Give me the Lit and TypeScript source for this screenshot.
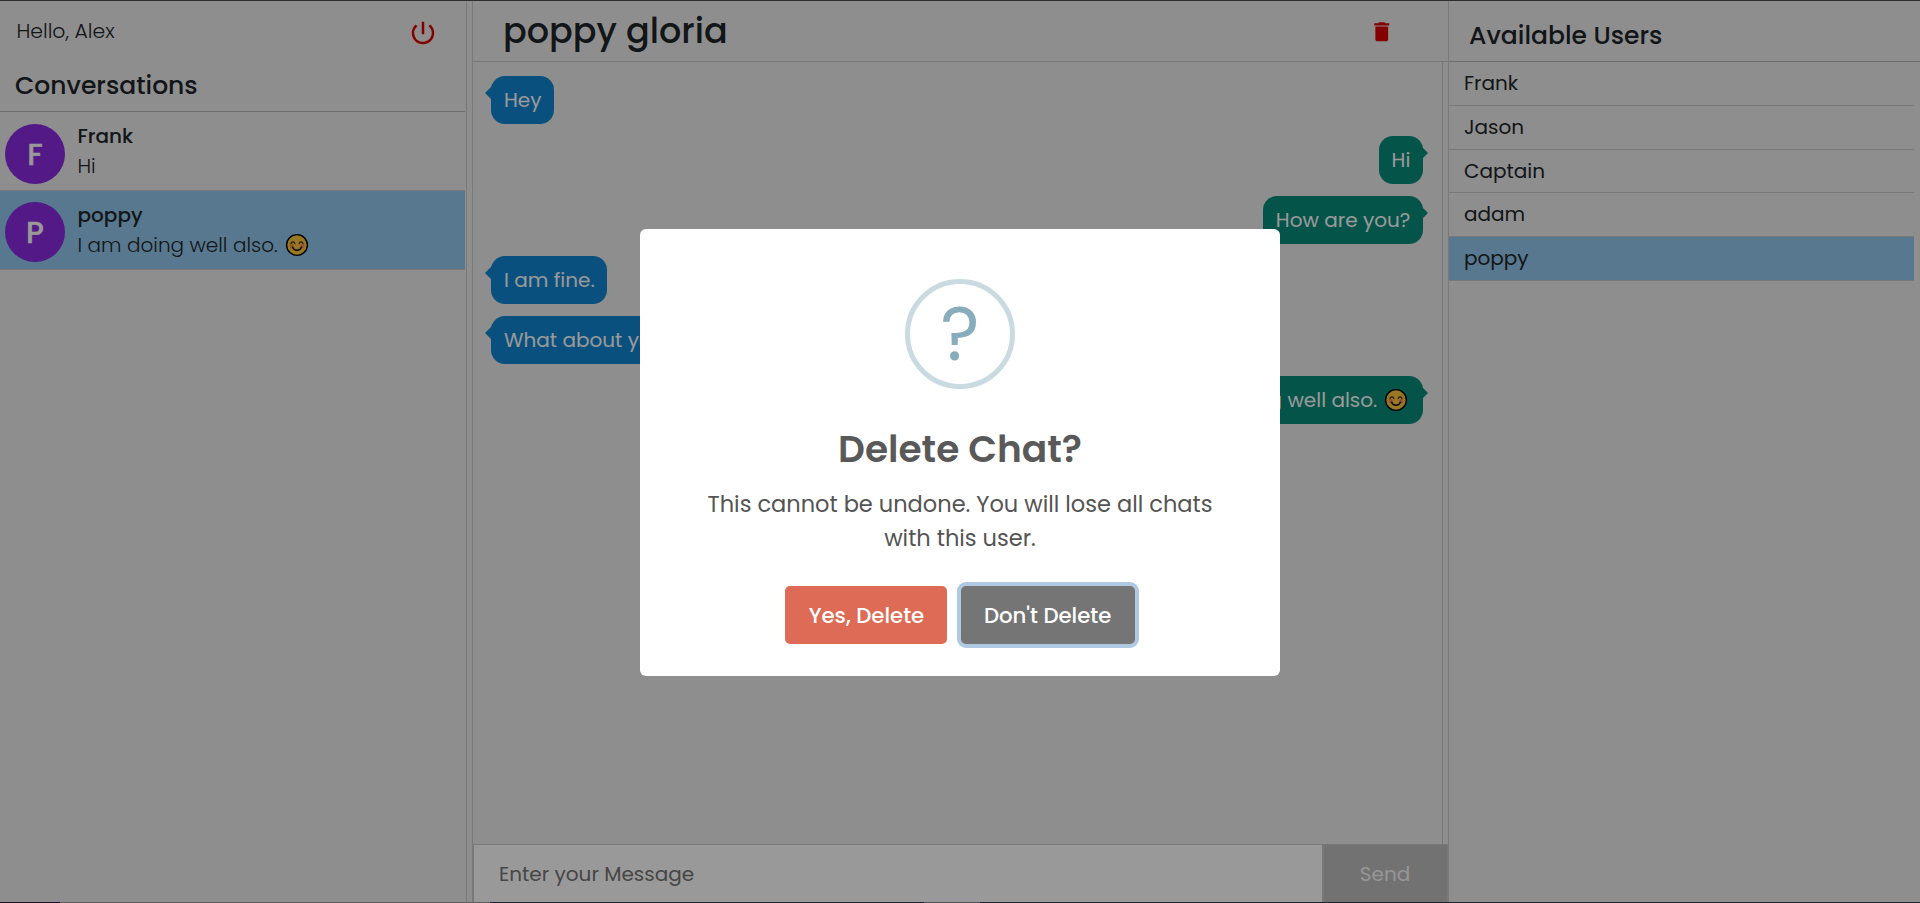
import { LitElement, html, css, svg } from "lit";
import { customElement, property } from "lit/decorators.js";
import { classMap } from "lit/directives/class-map.js";

const base = css`
  * { box-sizing: border-box; }
  svg { display: block; }
`;

const smiley = html`<svg width="24" height="24" viewBox="0 0 24 24" fill="none" stroke-linecap="round">
  ${svg`<circle cx="12" cy="12" r="10.4" fill="#ffc83d" stroke="#000" stroke-width="1.4"></circle>
  <circle cx="6.8" cy="13.2" r="2.3" fill="#f68f55"></circle>
  <circle cx="17.2" cy="13.2" r="2.3" fill="#f68f55"></circle>
  <path d="M6 10.6c.5-2.2 3.3-2.2 3.8 0M14.2 10.6c.5-2.2 3.3-2.2 3.8 0" stroke="#3a1f12" stroke-width="1.2"></path>
  <path d="M7.6 14.2c1.6 4 7.2 4 8.8 0" stroke="#000" stroke-width="1.4"></path>`}
</svg>`;

interface Message { text: string; mine?: boolean; emoji?: boolean; }

const conversations = [
  { name: "Frank", last: "Hi", emoji: false, active: false },
  { name: "poppy", last: "I am doing well also.", emoji: true, active: true },
];
const messages: Message[] = [
  { text: "Hey" },
  { text: "Hi", mine: true },
  { text: "How are you?", mine: true },
  { text: "I am fine." },
  { text: "What about you?" },
  { text: "I am doing well also.", mine: true, emoji: true },
];
const users = ["Frank", "Jason", "Captain", "adam", "poppy"];

@customElement("conversation-list")
export class ConversationList extends LitElement {
  static styles = [base, css`
    :host { display: block; width: 467px; border-right: 1px solid #cacaca; }
    .hello { display: flex; justify-content: space-between; height: 61px; padding: 14px 28px 0 16.5px; font-size: 20.4px; font-weight: 300; line-height: 32px; }
    .power { margin-top: 2.5px; }
    h2 { margin: 0 1px 0 0; height: 50px; padding: 5px 15px 0; font-size: 25px; font-weight: 500; line-height: 37px; border-bottom: 1px solid #b4b4b4; }
    .row { display: flex; gap: 12.5px; height: 79px; margin-right: 1px; padding: 12px 5px 0; border-bottom: 1px solid #cacaca; }
    .row.active { background: #91c8ed; padding-top: 11px; }
    .avatar { display: grid; place-items: center; width: 60px; height: 60px; border-radius: 50%; background: #8a2be2; color: #fff; font-size: 30px; font-weight: 500; padding-top: 1px; -webkit-text-stroke: 0.4px #fff; }
    .name { font-weight: 500; line-height: 30px; margin-top: -3px; }
    .last { display: flex; align-items: center; gap: 7.5px; font-weight: 300; line-height: 30px; }
    .active .name { margin-top: -2px; }
  `];
  render() {
    return html`
      <div class="hello"><span>Hello, Alex</span>
        <svg class="power" width="30" height="30" viewBox="0 0 24 24" fill="#dc0000"><path d="M13 3h-2v10h2V3zm4.83 2.17-1.42 1.42A6.92 6.92 0 0 1 19 12c0 3.87-3.13 7-7 7A6.995 6.995 0 0 1 7.58 6.58L6.17 5.17A8.932 8.932 0 0 0 3 12a9 9 0 0 0 18 0c0-2.74-1.23-5.18-3.17-6.83z"></path></svg>
      </div>
      <h2>Conversations</h2>
      ${conversations.map((c) => html`
        <div class=${classMap({ row: true, active: c.active })}>
          <div class="avatar">${c.name[0].toUpperCase()}</div>
          <div><div class="name">${c.name}</div><div class="last">${c.last}${c.emoji ? smiley : ""}</div></div>
        </div>`)}`;
  }
}

@customElement("chat-bubble")
export class ChatBubble extends LitElement {
  @property({ attribute: false }) message!: Message;
  static styles = [base, css`
    :host { display: flex; }
    .bubble { position: relative; display: flex; align-items: center; gap: 7px; height: 48px; padding: 0 12px 0 13px; border-radius: 14px; background: #1285d2; color: #fff; white-space: nowrap; }
    .bubble::before { content: ""; position: absolute; top: 6.5px; left: -6px; border: 10px solid transparent; border-left: 0; border-right: 10px solid #1285d2; }
    .mine { margin-left: auto; padding: 0 12.7px; background: #088c7a; }
    .mine svg { margin-right: 2px; }
    .mine::before { left: auto; right: -5px; border: 10px solid transparent; border-right: 0; border-left: 10px solid #088c7a; }
  `];
  render() {
    const m = this.message;
    return html`<div class=${classMap({ bubble: true, mine: !!m.mine })}>${m.text}${m.emoji ? smiley : ""}</div>`;
  }
}

@customElement("chat-panel")
export class ChatPanel extends LitElement {
  static styles = [base, css`
    :host { display: flex; flex-direction: column; width: 977px; margin-left: 5px; border: solid #cacaca; border-width: 0 1px; }
    header { display: flex; justify-content: space-between; height: 61px; padding: 0 53.5px 0 30px; border-bottom: 1px solid #cacaca; }
    h1 { margin: 0; font-size: 35px; font-weight: 500; line-height: 60px; }
    .trash { margin-top: 18px; }
    .messages { display: flex; flex: 1; flex-direction: column; gap: 12px; width: 970px; padding: 14px 19px 0 18px; border-right: 1px solid #cacaca; }
    .compose { display: flex; height: 58px; border-top: 1px solid #cacaca; border-left: 1px solid #cacaca; }
    .field { flex: 1; padding-left: 25px; background: #fff; color: #757575; line-height: 59px; }
    .send { width: 126px; padding-right: 1px; border: solid #cacaca; border-width: 0 1px 0 2px; background: #bebebe; color: #fafafa; text-align: center; line-height: 59px; }
  `];
  render() {
    return html`
      <header><h1>poppy gloria</h1>
        <svg class="trash" width="25.5" height="25.5" viewBox="0 0 24 24" fill="#dc0000"><path d="M6 19c0 1.1.9 2 2 2h8c1.1 0 2-.9 2-2V7H6v12zM19 4h-3.5l-1-1h-5l-1 1H5v2h14V4z"></path></svg>
      </header>
      <div class="messages">${messages.map((m) => html`<chat-bubble .message=${m}></chat-bubble>`)}</div>
      <div class="compose"><div class="field">Enter your Message</div><div class="send">Send</div></div>`;
  }
}

@customElement("user-list")
export class UserList extends LitElement {
  static styles = [base, css`
    :host { display: block; flex: 1; }
    h2 { margin: 0; height: 61px; padding: 16px 20px 0; font-size: 25px; font-weight: 500; line-height: 37px; border-bottom: 1px solid #b4b4b4; }
    .user { height: 43.75px; margin-right: 6px; padding: 0 15px; line-height: 43px; border-bottom: 1px solid #cacaca; }
    .active { background: #91c8ed; }
  `];
  render() {
    return html`<h2>Available Users</h2>
      ${users.map((u) => html`<div class=${classMap({ user: true, active: u === "poppy" })}>${u}</div>`)}`;
  }
}

@customElement("confirm-dialog")
export class ConfirmDialog extends LitElement {
  static styles = [base, css`
    :host { display: block; width: 640px; height: 447px; padding: 50px 25px 0; border-radius: 6px; background: #fff; color: #545454; text-align: center; }
    .icon { display: grid; place-items: center; width: 110px; height: 110px; margin: 0 auto; border: 5px solid #c9dae1; border-radius: 50%; color: #87adbd; font-size: 75px; line-height: 100px; }
    h2 { margin: 38px 0 15px; color: #595959; font-size: 37.5px; font-weight: 600; line-height: 45px; }
    p { margin: 0 40px; font-size: 22.5px; line-height: 34px; }
    .actions { display: flex; justify-content: center; gap: 13.4px; margin-top: 31px; }
    .btn { padding: 14px 23.2px 12px; border-radius: 5px; background: #dd6b55; color: #fff; font-size: 21.25px; font-weight: 500; line-height: 32px; }
    .cancel { background: #757575; box-shadow: 0 0 0 4px #afc9e3; }
  `];
  render() {
    return html`<div class="icon">?</div>
      <h2>Delete Chat?</h2>
      <p>This cannot be undone. You will lose all chats with this user.</p>
      <div class="actions"><div class="btn">Yes, Delete</div><div class="btn cancel">Don't Delete</div></div>`;
  }
}

@customElement("app-root")
export class AppRoot extends LitElement {
  static styles = [base, css`
    :host { position: relative; display: flex; flex-direction: column; width: 100%; height: 903px; overflow: hidden; background: #ededed; color: #212529; font: 400 20px/1.5 Poppins, Inter, sans-serif; }
    .page { display: flex; height: 902px; padding-top: 1px; }
    .edge { height: 1px; background: linear-gradient(90deg, #1b1230 60px, #5f5f5f 60px 490px, #1c2438 490px 924px, #4a5163 924px 980px, #1c2438 980px); position: relative; z-index: 2; }
    .overlay { position: absolute; inset: 0; display: grid; justify-items: center; align-items: start; padding-top: 229px; background: rgba(0, 0, 0, 0.4); border-top: 1px solid #2f2d2f; }
    confirm-dialog { margin-top: -1px; }
  `];
  render() {
    return html`
      <div class="page"><conversation-list></conversation-list><chat-panel></chat-panel><user-list></user-list></div>
      <div class="edge"></div>
      <div class="overlay"><confirm-dialog></confirm-dialog></div>`;
  }
}
